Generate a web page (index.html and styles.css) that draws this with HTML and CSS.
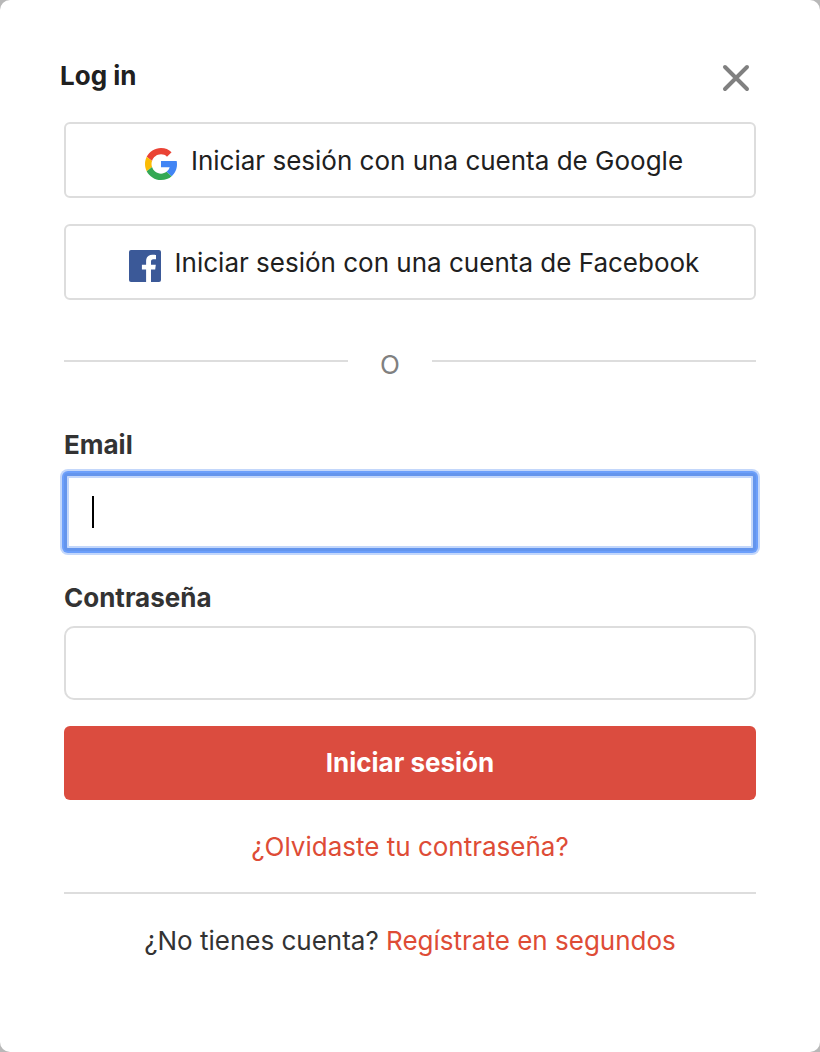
FILE: index.html
```html
<!DOCTYPE html>
<html lang="es">
<head>
<meta charset="utf-8">
<meta name="viewport" content="width=device-width, initial-scale=1">
<title>Log in</title>
<link rel="stylesheet" href="styles.css">
</head>
<body>
<main class="dialog">
  <header class="dialog-header">
    <h1 class="dialog-title">Log in</h1>
    <button class="close" type="button" aria-label="Cerrar">
      <svg class="close-icon" viewBox="0 0 28 28" aria-hidden="true"><path d="M3 3l22 22M25 3L3 25" fill="none" stroke="#808080" stroke-width="4" stroke-linecap="round"/></svg>
    </button>
  </header>
  <div class="providers">
    <button class="provider" type="button">
      <svg class="provider-icon" viewBox="0 0 48 48" aria-hidden="true">
        <path fill="#EA4335" d="M24 0C14.62 0 6.51 5.38 2.56 13.22l7.98 6.19C12.43 13.72 17.74 9.5 24 9.5c3.54 0 6.6 1.22 9 3.5l6.85-6.75C35.9 2.38 30.47 0 24 0z"/>
        <path fill="#4285F4" d="M47.5 19.6H24v9.4h12.94c-.58 2.96-2.26 5.03-4.78 6.73l7.73 6.5C44.4 38.2 48 31.9 48 24.6c0-1.8-.2-3.5-.5-5z"/>
        <path fill="#FBBC05" d="M10.53 28.59c-.48-1.45-.76-2.99-.76-4.59s.27-3.14.76-4.59l-7.98-6.19C.92 16.46 0 20.12 0 24c0 3.88.92 7.54 2.56 10.78l7.97-6.19z"/>
        <path fill="#34A853" d="M24 48c6.48 0 11.93-2.13 15.89-5.81l-7.73-6.5c-2.15 1.45-4.92 2.8-8.16 2.8-6.26 0-11.57-4.22-13.47-9.91l-7.98 6.19C6.51 42.62 14.62 48 24 48z"/>
      </svg>
      <span>Iniciar sesión con una cuenta de Google</span>
    </button>
    <button class="provider" type="button">
      <svg class="provider-icon" viewBox="0 0 32 32" aria-hidden="true">
        <rect width="32" height="32" rx="2" fill="#3B5998"/>
        <path fill="#fff" d="M22 32V19.6h4.2l.6-4.8H22v-3.1c0-1.4.4-2.4 2.4-2.4H27V5c-.4-.1-2-.2-3.7-.2-3.7 0-6.2 2.3-6.2 6.4v3.6h-4.2v4.8h4.2V32z"/>
      </svg>
      <span>Iniciar sesión con una cuenta de Facebook</span>
    </button>
  </div>
  <div class="divider"><span class="divider-text">O</span></div>
  <form class="form">
    <label class="label" for="email">Email</label>
    <div class="active-field">
      <input class="field" id="email" type="email">
    </div>
    <label class="label" for="password">Contraseña</label>
    <input class="field" id="password" type="password">
    <button class="submit" type="submit">Iniciar sesión</button>
  </form>
  <p class="forgot"><a class="link" href="#forgot">¿Olvidaste tu contraseña?</a></p>
  <p class="signup">¿No tienes cuenta? <a class="link" href="#signup">Regístrate en segundos</a></p>
</main>
</body>
</html>
```
FILE: styles.css
```css
* { box-sizing: border-box; }
body {
  margin: 0;
  background: #b8b8b8;
  color: #202020;
  font: 26px/32px Inter, sans-serif;
}
button, input { font: inherit; color: inherit; }
.dialog {
  min-height: 100vh;
  padding: 56px 64px;
  background: #fff;
  border-radius: 10px;
}
.dialog-header {
  display: flex;
  align-items: center;
  justify-content: space-between;
  margin: 0 0 22px -4px;
  height: 44px;
}
.dialog-title { margin: 0 0 4px; font-size: 26px; line-height: 32px; }
.close { padding: 6px; border: 0; background: none; }
.close-icon { display: block; width: 28px; height: 28px; }
.providers { display: grid; gap: 26px; }
.provider {
  display: flex;
  align-items: center;
  justify-content: center;
  gap: 14px;
  width: 100%;
  height: 76px;
  padding: 2px 8px 0 16px;
  border: 2px solid #ddd;
  border-radius: 6px;
  background: #fff;
}
.provider-icon { flex: none; width: 32px; height: 32px; margin-top: 6px; }
.divider {
  display: flex;
  align-items: center;
  gap: 32px;
  margin: 41px 0 48px;
  color: #808080;
}
.divider::before, .divider::after {
  content: "";
  flex: 284;
  height: 2px;
  background: #ddd;
}
.divider::after { flex-grow: 324; }
.divider-text { padding-top: 8px; }
.form { display: flex; flex-direction: column; }
.label { margin-bottom: 12px; color: #333; font-weight: 700; }
.field {
  display: block;
  width: 100%;
  height: 74px;
  padding: 0 26px;
  border: 2px solid #ddd;
  border-radius: 10px;
  background: #fff;
}
.active-field { position: relative; margin-bottom: 31px; }
.active-field .field {
  height: 78px;
  border: 3px solid #6495ed;
  border-radius: 4px;
  box-shadow: 0 0 0 2px #6c9ffb, 0 0 0 4px #c3d7fb, inset 0 0 0 2px #c3d7fb;
}
.active-field::after {
  content: "";
  position: absolute;
  top: 23px;
  left: 28px;
  width: 2px;
  height: 32px;
  background: #000;
}
.field:focus { outline: 0; }
.submit {
  height: 74px;
  margin-top: 26px;
  border: 0;
  border-radius: 6px;
  background: #db4c3f;
  color: #fff;
  font-weight: 700;
}
.forgot, .signup { margin: 0; text-align: center; }
.forgot { padding: 31px 0 29px; border-bottom: 2px solid #ddd; }
.signup { padding-top: 31px; color: #333; }
.link { color: #de4c36; text-decoration: none; }
```
